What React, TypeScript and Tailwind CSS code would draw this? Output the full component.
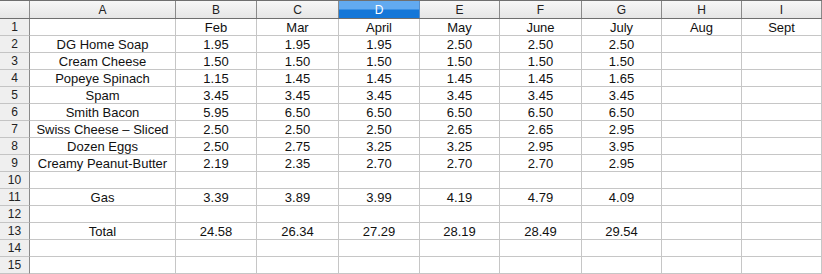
import React from 'react';

const COLS = [
	{ key: 'A', w: 'w-[146px]' },
	{ key: 'B', w: 'w-[81px]' },
	{ key: 'C', w: 'w-[82px]' },
	{ key: 'D', w: 'w-[81px]' },
	{ key: 'E', w: 'w-[80px]' },
	{ key: 'F', w: 'w-[82px]' },
	{ key: 'G', w: 'w-[80px]' },
	{ key: 'H', w: 'w-[80px]' },
	{ key: 'I', w: 'w-[80px]' }
];

// rows 1..15, one entry per column A..I
const ROWS: string[][] = [
	['', 'Feb', 'Mar', 'April', 'May', 'June', 'July', 'Aug', 'Sept'],
	['DG Home Soap', '1.95', '1.95', '1.95', '2.50', '2.50', '2.50', '', ''],
	['Cream Cheese', '1.50', '1.50', '1.50', '1.50', '1.50', '1.50', '', ''],
	['Popeye Spinach', '1.15', '1.45', '1.45', '1.45', '1.45', '1.65', '', ''],
	['Spam', '3.45', '3.45', '3.45', '3.45', '3.45', '3.45', '', ''],
	['Smith Bacon', '5.95', '6.50', '6.50', '6.50', '6.50', '6.50', '', ''],
	['Swiss Cheese – Sliced', '2.50', '2.50', '2.50', '2.65', '2.65', '2.95', '', ''],
	['Dozen Eggs', '2.50', '2.75', '3.25', '3.25', '2.95', '3.95', '', ''],
	['Creamy Peanut-Butter', '2.19', '2.35', '2.70', '2.70', '2.70', '2.95', '', ''],
	['', '', '', '', '', '', '', '', ''],
	['Gas', '3.39', '3.89', '3.99', '4.19', '4.79', '4.09', '', ''],
	['', '', '', '', '', '', '', '', ''],
	['Total', '24.58', '26.34', '27.29', '28.19', '28.49', '29.54', '', ''],
	['', '', '', '', '', '', '', '', ''],
	['', '', '', '', '', '', '', '', '']
];

export default function App() {
	return (
		<div className="w-[822px] h-[274px] overflow-hidden bg-white font-['Liberation_Sans',Arial,sans-serif]">
			{/* Column headers */}
			<div className="flex h-[19px] border-t border-b border-[#6f6f6f]">
				<div className="w-[30px] shrink-0 border-r border-[#8a8a8a] bg-gradient-to-b from-[#f7f7f7] to-[#e6e6e6]" />
				{COLS.map(c => (
					<div
						key={c.key}
						className={`${c.w} shrink-0 border-r flex items-center justify-center text-[12px] leading-none ${
							c.key === 'D'
								? 'bg-[linear-gradient(to_bottom,#62aaf0_0%,#62aaf0_45%,#1477d8_55%,#1477d8_100%)] text-white border-[#5a8fc8]'
								: 'bg-gradient-to-b from-[#f7f7f7] to-[#e6e6e6] text-[#222] border-[#8a8a8a]'
						}`}
					>
						{c.key}
					</div>
				))}
			</div>

			{/* Body rows */}
			{ROWS.map((row, i) => (
				<div key={i} className="flex h-[17px]">
					<div className="w-[30px] shrink-0 border-r border-b border-r-[#8a8a8a] border-b-[#c4c4c4] bg-[#efefef] flex items-center justify-center text-[12px] leading-none text-[#222]">
						{i + 1}
					</div>
					{row.map((v, j) => (
						<div
							key={j}
							className={`${COLS[j].w} shrink-0 border-r border-b border-[#c6c6c6] flex items-center justify-center text-[13px] leading-none text-[#111] whitespace-nowrap`}
						>
							{v}
						</div>
					))}
				</div>
			))}
		</div>
	);
}
